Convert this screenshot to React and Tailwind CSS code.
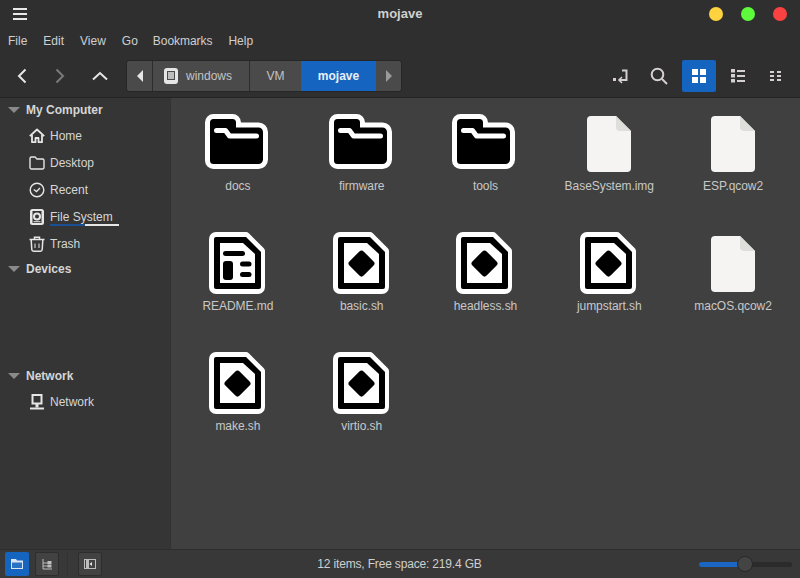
import React from "react";

const FolderIcon = () => (
  <svg width="64" height="55" viewBox="0 0 64 55" className="-ml-[2px] mt-px block">
    <path
      d="M8.500 2.500h19a6 6 0 0 1 6 6V11h20a7 7 0 0 1 7 7v27.500a7 7 0 0 1-7 7H8.500a6 6 0 0 1-6-6V8.500a6 6 0 0 1 6-6z"
      fill="#000"
      stroke="#fff"
      strokeWidth="5"
    />
    <path
      d="M11.500 16.500h9l4 5.500h27"
      fill="none"
      stroke="#fff"
      strokeWidth="5"
      strokeLinecap="round"
      strokeLinejoin="round"
    />
  </svg>
);

const PlainFile = () => (
  <svg width="44" height="56" viewBox="0 0 44 56" className="mt-[3px] block">
    <path
      d="M4 0h25l15 15v37a4 4 0 0 1-4 4H4a4 4 0 0 1-4-4V4a4 4 0 0 1 4-4z"
      fill="#f5f4f2"
    />
    <path d="M29 0l15 15H33a4 4 0 0 1-4-4z" fill="#dededb" />
  </svg>
);

const Page = ({ children }) => (
  <svg width="56" height="62" viewBox="0 0 56 62" className="-ml-[2px] -mt-px block">
    <path
      d="M7 0h30a4 4 0 0 1 2.800 1.200l15 15a4 4 0 0 1 1.200 2.800V55a7 7 0 0 1-7 7H7a7 7 0 0 1-7-7V7a7 7 0 0 1 7-7z"
      fill="#fff"
    />
    <path
      d="M7 5h30l15 15v35a2 2 0 0 1-2 2H7a2 2 0 0 1-2-2V7a2 2 0 0 1 2-2z"
      fill="#000"
    />
    <path d="M11 11h23l12 11v29H11z" fill="#fff" />
    {children}
  </svg>
);

const ScriptIcon = () => (
  <Page>
    <path
      d="M28.500 18.500a3 3 0 0 1 2.100.900l10 10a3 3 0 0 1 0 4.200l-10 10a3 3 0 0 1-4.200 0l-10-10a3 3 0 0 1 0-4.200l10-10a3 3 0 0 1 2.100-.900z"
      fill="#000"
    />
  </Page>
);

const DocIcon = () => (
  <Page>
    <rect x="14" y="19" width="22" height="5" rx="2.500" fill="#000" />
    <rect x="14" y="29" width="10" height="19" rx="3" fill="#000" />
    <rect x="31" y="29.500" width="11.500" height="5" rx="2.500" fill="#000" />
    <rect x="31" y="40" width="11.500" height="5" rx="2.500" fill="#000" />
  </Page>
);

const items = [
  { name: "docs", icon: <FolderIcon /> },
  { name: "firmware", icon: <FolderIcon /> },
  { name: "tools", icon: <FolderIcon /> },
  { name: "BaseSystem.img", icon: <PlainFile /> },
  { name: "ESP.qcow2", icon: <PlainFile /> },
  { name: "README.md", icon: <DocIcon /> },
  { name: "basic.sh", icon: <ScriptIcon /> },
  { name: "headless.sh", icon: <ScriptIcon /> },
  { name: "jumpstart.sh", icon: <ScriptIcon /> },
  { name: "macOS.qcow2", icon: <PlainFile /> },
  { name: "make.sh", icon: <ScriptIcon /> },
  { name: "virtio.sh", icon: <ScriptIcon /> },
];

const HomeIcon = () => (
  <svg width="16" height="16" viewBox="0 0 16 16" fill="none" stroke="#e6e6e6" strokeWidth="1.800">
    <path d="M.8 8.200L8 1.500l7.200 6.700" strokeLinejoin="round" />
    <path d="M3 7v7.200h3.500V10h3v4.200H13V7" strokeLinejoin="round" />
  </svg>
);

const DesktopIcon = () => (
  <svg width="16" height="16" viewBox="0 0 16 16" fill="none" stroke="#e6e6e6" strokeWidth="1.400">
    <path d="M1 3.500a1.500 1.500 0 0 1 1.500-1.500h3.500l2 2h5.500a1.500 1.500 0 0 1 1.500 1.500v7a1.500 1.500 0 0 1-1.500 1.500h-11A1.500 1.500 0 0 1 1 12.500z" strokeLinejoin="round" />
  </svg>
);

const RecentIcon = () => (
  <svg width="16" height="16" viewBox="0 0 16 16" fill="none" stroke="#e6e6e6" strokeWidth="1.400">
    <circle cx="8" cy="8" r="6.800" />
    <path d="M4.800 7.500L7.500 9.500 11 6" />
  </svg>
);

const DiskIcon = () => (
  <svg width="16" height="16" viewBox="0 0 16 16">
    <path fillRule="evenodd" d="M3.500 0h9a2.500 2.500 0 0 1 2.500 2.500v11a2.500 2.500 0 0 1-2.500 2.500h-9A2.500 2.500 0 0 1 1 13.500v-11A2.500 2.500 0 0 1 3.500 0zM3.500 2v12h9V2zM8 3.500a4 4 0 1 1 0 8 4 4 0 0 1 0-8zm0 2a2 2 0 1 0 0 4 2 2 0 0 0 0-4z" fill="#e6e6e6" />
    <rect x="4.500" y="12.200" width="7" height="1" fill="#e6e6e6" />
  </svg>
);

const TrashIcon = () => (
  <svg width="16" height="16" viewBox="0 0 16 16" fill="none" stroke="#e6e6e6" strokeWidth="1.500">
    <path d="M.5 3.500h15M5.500 3V1.200h5V3" />
    <path d="M2.200 4l.6 9.500a1.800 1.800 0 0 0 1.800 1.700h6.800a1.800 1.800 0 0 0 1.800-1.700l.6-9.500" />
    <path d="M6 7.500v4.500M10 7.500v4.500" strokeWidth="1" />
  </svg>
);

const NetworkIcon = () => (
  <svg width="16" height="16" viewBox="0 0 16 16" fill="#e6e6e6">
    <path fillRule="evenodd" d="M2.500 0h11v10.500h-11zM4.500 2v6.500h7V2z" />
    <rect x="6.500" y="10" width="3" height="3.500" />
    <rect x="1" y="13.500" width="14" height="2" />
  </svg>
);

const SectionHeader = ({ label }) => (
  <div className="flex h-6 items-center pl-2">
    <div className="h-0 w-0 border-x-[6px] border-t-[6px] border-x-transparent border-t-[#8a8a8a]" />
    <span className="ml-1.5 text-xs font-bold text-[#d6d6d6]">{label}</span>
  </div>
);

const SideItem = ({ icon, label, bar }) => (
  <div className="flex h-[27px] items-center pl-[29px]">
    <div className="w-[21px] shrink-0">{icon}</div>
    <div className="relative">
      <span className="text-xs text-[#d6d6d6]">{label}</span>
      {bar && (
        <div className="absolute left-0 top-[15px] flex h-[2px] w-[69px]">
          <div className="w-[35px] bg-[#1a4f94]" />
          <div className="flex-1 bg-[#e6e6e6]" />
        </div>
      )}
    </div>
  </div>
);

const App = () => {
  return (
    <div
      className="flex h-[578px] w-[800px] flex-col overflow-hidden bg-[#404040] text-xs"
      style={{ fontFamily: '"Liberation Sans", Arial, sans-serif' }}
    >
      {/* header */}
      <div className="h-[98px] shrink-0 border-b border-[#232323] bg-[#2f2f2f]">
        <div className="relative flex h-[27px] items-center justify-between pl-[13px] pr-[13px]">
          <div className="flex w-[14px] flex-col gap-[3px] pt-px">
            <div className="h-[2px] bg-[#e8e8e8]" />
            <div className="h-[2px] bg-[#e8e8e8]" />
            <div className="h-[2px] bg-[#e8e8e8]" />
          </div>
          <span className="absolute left-0 right-0 text-center text-[13px] font-bold text-[#cfcfcf]">
            mojave
          </span>
          <div className="flex gap-[18px] pt-px">
            <div className="h-[14px] w-[14px] rounded-full bg-[#ffd23f]" />
            <div className="h-[14px] w-[14px] rounded-full bg-[#5dfb3c]" />
            <div className="h-[14px] w-[14px] rounded-full bg-[#fb4242]" />
          </div>
        </div>

        <div className="flex h-[27px] items-center gap-4 pl-2 text-[#cfcfcf]">
          <span>File</span>
          <span>Edit</span>
          <span>View</span>
          <span>Go</span>
          <span className="-ml-px tracking-[-0.05px]">Bookmarks</span>
          <span>Help</span>
        </div>

        <div className="flex h-[43px] items-center pt-[1px]">
          <div className="flex w-[126px] shrink-0 items-center">
            <svg width="12" height="16" viewBox="0 0 12 16" fill="none" stroke="#e6e6e6" strokeWidth="2" className="ml-4">
              <path d="M9.500 1.500L3 8l6.500 6.500" />
            </svg>
            <svg width="12" height="16" viewBox="0 0 12 16" fill="none" stroke="#7a7a7a" strokeWidth="2" className="ml-[26px]">
              <path d="M2.500 1.500L9 8l-6.500 6.500" />
            </svg>
            <svg width="16" height="10" viewBox="0 0 16 10" fill="none" stroke="#e6e6e6" strokeWidth="2" className="ml-[26px]">
              <path d="M1 8.500L8 2l7 6.500" />
            </svg>
          </div>

          <div className="flex h-8 w-[276px] overflow-hidden rounded-[3px] border border-[#262626] bg-[#4a4a4a] text-[#c4c4c4]">
            <div className="flex w-[26px] items-center justify-center border-r border-[#2c2c2c]">
              <div className="h-0 w-0 border-y-[6px] border-r-[6px] border-y-transparent border-r-[#e6e6e6]" />
            </div>
            <div className="flex w-[97px] items-center border-r border-[#2c2c2c] pl-[11px]">
              <svg width="14" height="16" viewBox="0 0 14 16" className="mr-[8px]">
                <rect x="0" y="0" width="14" height="16" rx="3" fill="#e6e6e6" />
                <rect x="3" y="3" width="8" height="9" fill="#4a4a4a" />
                <path d="M4 4h6v7H4z" fill="#bdbdbd" />
              </svg>
              <span>windows</span>
            </div>
            <div className="flex w-[51px] items-center justify-center">VM</div>
            <div className="flex w-[75px] items-center justify-center bg-[#1565c0] font-bold text-[#e8eef6]">
              mojave
            </div>
            <div className="flex flex-1 items-center justify-center">
              <div className="h-0 w-0 border-y-[6px] border-l-[6px] border-y-transparent border-l-[#9a9a9a]" />
            </div>
          </div>

          <div className="ml-auto flex items-center pr-[18px]">
            <svg width="16" height="16" viewBox="0 0 16 16" fill="none" stroke="#d6d0d0" strokeWidth="2" className="mr-[21px]">
              <rect x="0" y="10" width="3" height="3" fill="#d6d0d0" stroke="none" />
              <path d="M9 2.500h4.500v9.500H7" />
              <path d="M9 9l-3 3 3 3" strokeWidth="1.600" />
            </svg>
            <svg width="18" height="18" viewBox="0 0 18 18" fill="none" stroke="#d6d0d0" strokeWidth="2" className="mr-[14px]">
              <circle cx="7.500" cy="7.500" r="5.800" />
              <path d="M12 12l5 5" />
            </svg>
            <div className="flex h-8 w-[34px] items-center justify-center rounded-[2px] bg-[#1565c0]">
              <div className="grid grid-cols-2 gap-[2px]">
                <div className="h-[6px] w-[6px] bg-white" />
                <div className="h-[6px] w-[6px] bg-white" />
                <div className="h-[6px] w-[6px] bg-white" />
                <div className="h-[6px] w-[6px] bg-white" />
              </div>
            </div>
            <svg width="14" height="14" viewBox="0 0 14 14" fill="#d6d0d0" className="ml-[15px]">
              <rect x="0" y="0" width="4" height="3.500" />
              <rect x="0" y="5" width="4" height="3.500" />
              <rect x="0" y="10" width="4" height="3.500" />
              <rect x="6" y="1" width="8" height="2" />
              <rect x="6" y="6" width="8" height="2" />
              <rect x="6" y="11" width="8" height="2" />
            </svg>
            <svg width="12" height="10" viewBox="0 0 12 10" fill="#d6d0d0" className="ml-[25px]">
              <rect x="0" y="0" width="4" height="2" />
              <rect x="0" y="4" width="4" height="2" />
              <rect x="0" y="8" width="4" height="2" />
              <rect x="7" y="0" width="4" height="2" />
              <rect x="7" y="4" width="4" height="2" />
              <rect x="7" y="8" width="4" height="2" />
            </svg>
          </div>
        </div>
      </div>

      {/* body */}
      <div className="flex min-h-0 flex-1">
        <div className="w-[171px] shrink-0 border-r border-[#333] bg-[#353535]">
          <SectionHeader label="My Computer" />
          <SideItem icon={<HomeIcon />} label="Home" />
          <SideItem icon={<DesktopIcon />} label="Desktop" />
          <SideItem icon={<RecentIcon />} label="Recent" />
          <SideItem icon={<DiskIcon />} label="File System" bar />
          <SideItem icon={<TrashIcon />} label="Trash" />
          <SectionHeader label="Devices" />
          <div className="mt-[83px]">
            <SectionHeader label="Network" />
            <SideItem icon={<NetworkIcon />} label="Network" />
          </div>
        </div>

        <div className="flex-1 bg-[#404040] pl-[5px] pr-[5px] pt-[15px]">
          <div className="grid grid-cols-5 auto-rows-[120px]">
            {items.map((item) => (
              <div key={item.name} className="flex flex-col items-center">
                <div className="flex h-[64px] items-start">{item.icon}</div>
                <span className="mt-[1px] text-xs tracking-[-0.05px] text-[#c8c8c8]">{item.name}</span>
              </div>
            ))}
          </div>
        </div>
      </div>

      {/* status bar */}
      <div className="grid h-[29px] shrink-0 grid-cols-[1fr_auto_1fr] items-center border-t border-[#2d2d2d] bg-[#383838] text-[#cfcfcf]">
        <div className="flex items-center pl-[5px]">
          <div className="flex h-[24px] w-[24px] items-center justify-center rounded-[2px] bg-[#1565c0]">
            <svg width="12" height="10" viewBox="0 0 12 10">
              <path d="M0 0h5l1 1.500h6V10H0z" fill="#dce6f2" />
              <path d="M1 3.500h10V9H1z" fill="#2a72c4" />
            </svg>
          </div>
          <div className="ml-[6px] flex h-[24px] w-[24px] items-center justify-center rounded-[2px] border border-[#2d2d2d] bg-[#424242]">
            <svg width="12" height="12" viewBox="0 0 12 12" fill="none" stroke="#bdbdbd" strokeWidth="1">
              <path d="M2 1v10h9M2 5h5M2 8h5" />
              <rect x="7" y="3.500" width="3" height="2" fill="#bdbdbd" />
              <rect x="7" y="7" width="3" height="2" fill="#bdbdbd" />
            </svg>
          </div>
          <div className="ml-[8px] h-[24px] w-px bg-[#333]" />
          <div className="ml-[10px] flex h-[24px] w-[24px] items-center justify-center rounded-[2px] border border-[#2d2d2d] bg-[#424242]">
            <svg width="12" height="10" viewBox="0 0 12 10">
              <path fillRule="evenodd" d="M0 0h12v10H0zM1 1v8h10V1z" fill="#bdbdbd" />
              <path d="M2 1h3v8H2z" fill="#bdbdbd" />
              <path d="M8 3L5.500 5 8 7z" fill="#e6e6e6" />
            </svg>
          </div>
        </div>
        <span className="-ml-px text-center tracking-[-0.17px]">12 items, Free space: 219.4 GB</span>
        <div className="flex items-center justify-end pr-2">
          <div className="flex h-[5px] w-[93px] items-center rounded-full bg-[#2b2b2b]">
            <div className="h-[5px] w-[39px] rounded-l-full bg-[#1a66c2]" />
            <div className="-ml-[1px] h-[16px] w-[16px] rounded-full border border-[#282828] bg-[#444]" />
          </div>
        </div>
      </div>
    </div>
  );
};

export default App;
